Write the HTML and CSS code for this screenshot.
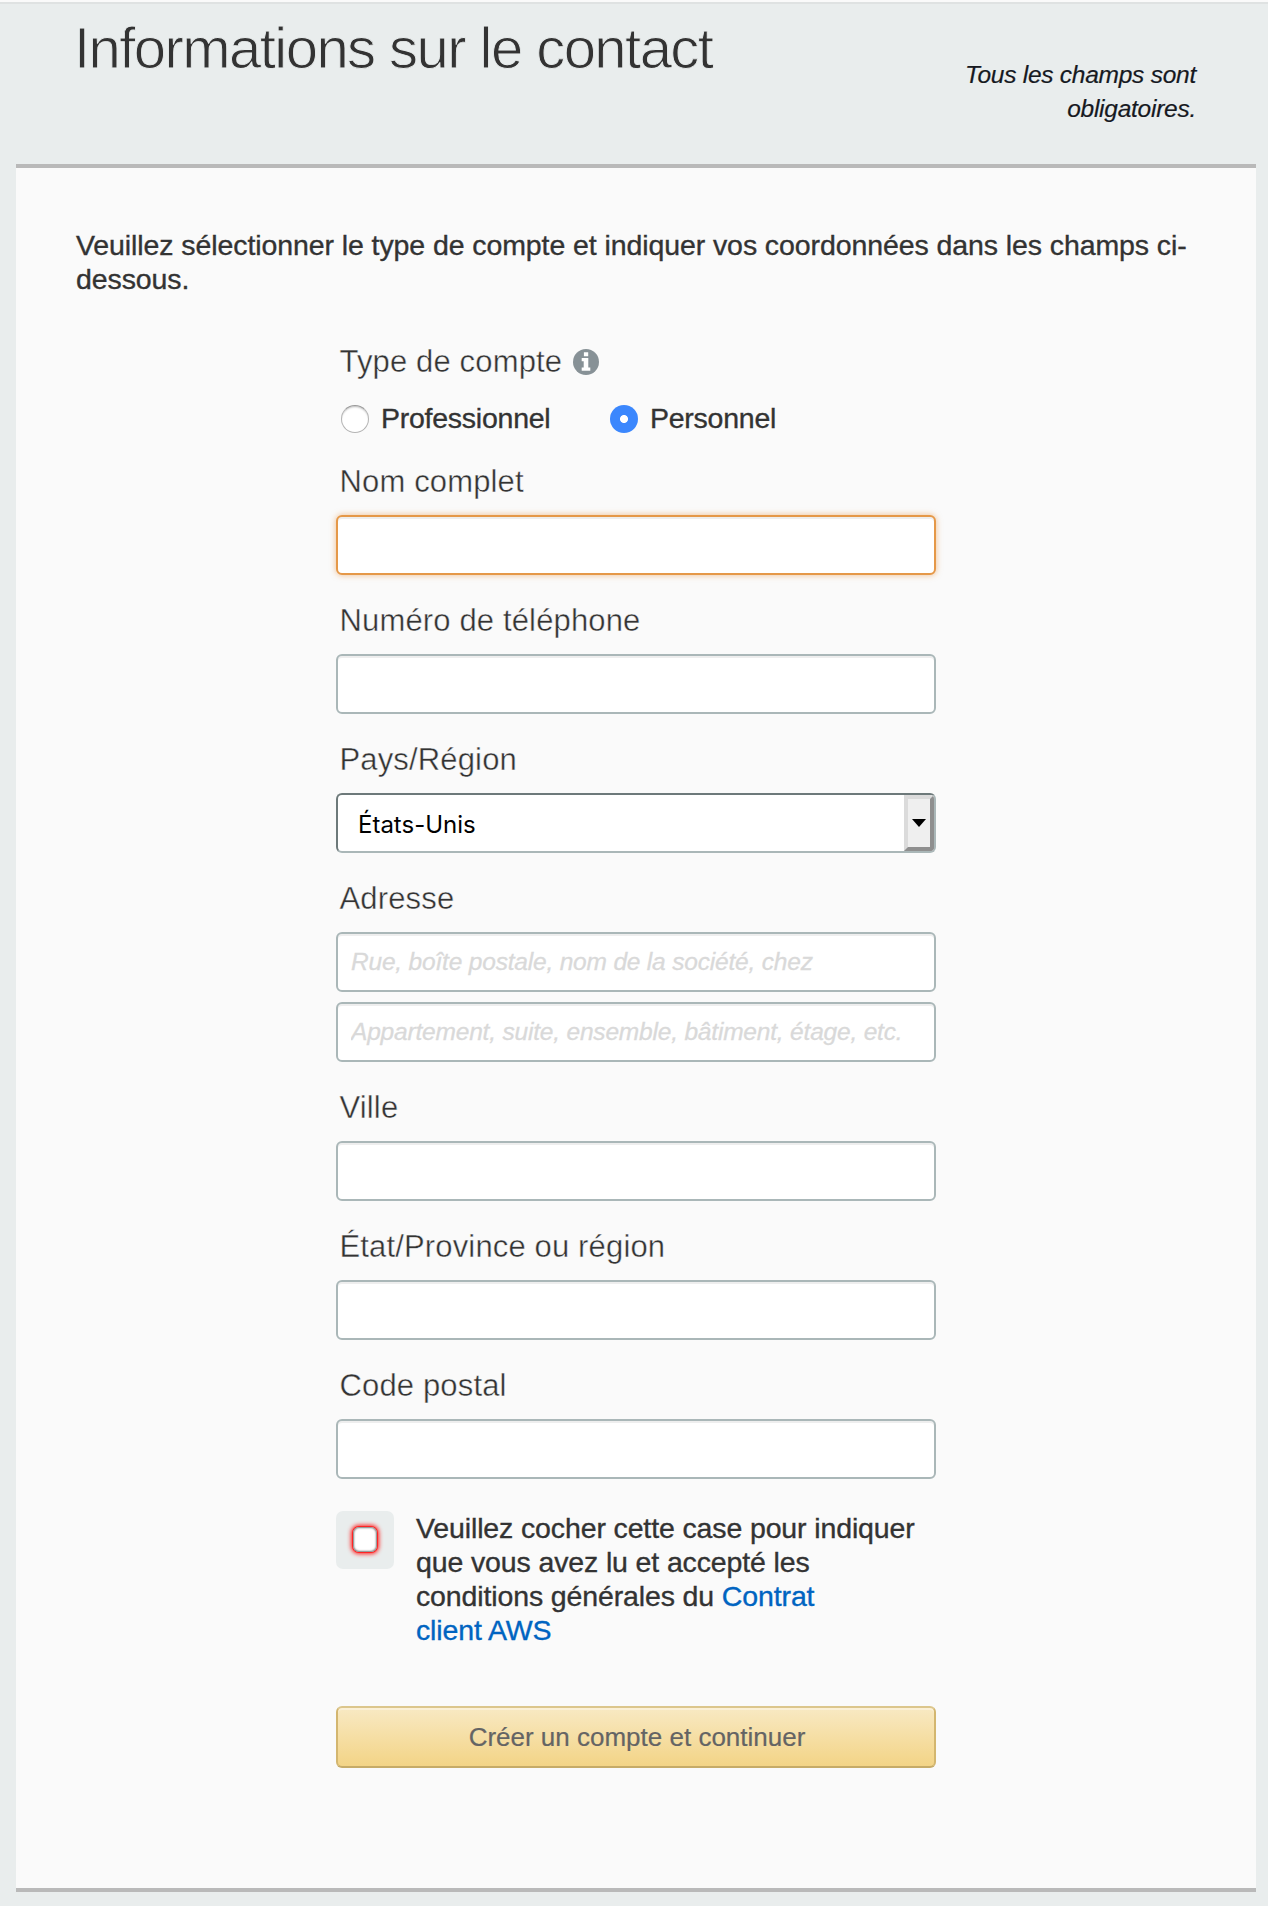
FILE: index.html
```
<!DOCTYPE html>
<html lang="fr">
<head>
<meta charset="utf-8">
<title>Informations sur le contact</title>
<link rel="stylesheet" href="styles.css">
</head>
<body>
<header class="header">
  <h1 class="title">Informations sur le contact</h1>
  <p class="required">Tous les champs sont obligatoires.</p>
</header>
<main class="panel">
  <p class="intro">Veuillez sélectionner le type de compte et indiquer vos coordonnées dans les champs ci-<br>dessous.</p>
  <form class="form">
    <div class="label type-label">Type de compte
      <svg class="info" viewBox="0 0 26 26" aria-hidden="true"><circle cx="13" cy="13" r="13" fill="#879196"/><path fill="#fff" d="M10.9 3.2h4.3v4.1h-4.3zM8.7 9h6.6v9.6h2v3.2H8.7v-3.2h2v-6.4h-2z"/></svg>
    </div>
    <div class="radios">
      <label class="choice pro"><input type="radio" name="type" class="radio">Professionnel</label>
      <label class="choice"><input type="radio" name="type" class="radio" checked>Personnel</label>
    </div>
    <div class="field"><label class="label" for="name">Nom complet</label><input class="input focused" id="name"></div>
    <div class="field"><label class="label" for="phone">Numéro de téléphone</label><input class="input" id="phone"></div>
    <div class="field"><span class="label">Pays/Région</span>
      <div class="select" role="combobox"><span class="value">États-Unis</span><span class="drop"><svg class="arrow" viewBox="0 0 14 8"><path d="M0 0h14L7 8z"/></svg></span></div>
    </div>
    <div class="field"><label class="label" for="street">Adresse</label><input class="input" id="street" placeholder="Rue, boîte postale, nom de la société, chez"><input class="input second" placeholder="Appartement, suite, ensemble, bâtiment, étage, etc."></div>
    <div class="field"><label class="label" for="city">Ville</label><input class="input" id="city"></div>
    <div class="field"><label class="label" for="state">État/Province ou région</label><input class="input" id="state"></div>
    <div class="field"><label class="label" for="zip">Code postal</label><input class="input" id="zip"></div>
    <div class="terms">
      <span class="check-wrap"><input type="checkbox" class="check"></span>
      <p class="terms-text">Veuillez cocher cette case pour indiquer<br>que vous avez lu et accepté les<br>conditions générales du <a class="link" href="#">Contrat<br>client AWS</a></p>
    </div>
    <button type="button" class="submit">Créer un compte et continuer</button>
  </form>
</main>
</body>
</html>
```
FILE: styles.css
```
* { box-sizing: border-box; }

body {
  margin: 0;
  height: 1906px;
  overflow: hidden;
  background: #e9eded;
  border-top: 2px solid #fafafa;
  color: #333;
  font: 28.5px/34px "Liberation Sans", Arial, sans-serif;
}

h1, p { margin: 0; }

.header {
  display: flex;
  justify-content: space-between;
  align-items: flex-start;
  height: 162px;
  padding: 0 72px 0 74px;
  border-top: 2px solid #dfe2e2;
}

/* The background-coloured stroke thins the regular face to a light weight. */
.title {
  padding-top: 9px;
  font-size: 58px;
  font-weight: 400;
  line-height: 70px;
  letter-spacing: -1.55px;
  -webkit-text-stroke: .9px #e9eded;
}

.required {
  width: 240px;
  padding-top: 54px;
  color: #16191f;
  font-size: 24.5px;
  font-style: italic;
  letter-spacing: -.25px;
  text-align: right;
  -webkit-text-stroke: .2px;
}

.panel {
  height: 1728px;
  margin: 0 12px 0 16px;
  padding: 60px 60px 0;
  background: #fafafa;
  border: solid #b9b9b9;
  border-width: 4px 0;
}

.intro {
  white-space: nowrap;
  letter-spacing: -.09px;
}

.intro, .choice, .terms-text { -webkit-text-stroke: .35px; }

.form {
  width: 600px;
  margin: 46px 0 0 260px;
}

.label {
  display: block;
  height: 40px;
  padding-left: 3.5px;
  font-size: 31px;
  line-height: 42px;
  letter-spacing: .15px;
  -webkit-text-stroke: .4px #fafafa;
}

.type-label {
  display: flex;
  align-items: center;
  gap: 11px;
}

.info {
  width: 26px;
  height: 26px;
  -webkit-text-stroke: 0;
}

.radios {
  display: flex;
  height: 34px;
  margin: 19px 0 26px;
  padding-left: 5px;
}

.choice {
  display: flex;
  align-items: center;
  letter-spacing: -.25px;
}

.pro { width: 269px; }

.radio {
  appearance: none;
  width: 28px;
  height: 28px;
  margin: 2px 12px 0 0;
  border: 1px solid #b4b4b4;
  border-top-color: #999;
  border-radius: 50%;
  background: #fff;
  box-shadow: inset 0 2px 2px -1px #bbb;
}

.radio:checked {
  border: 0;
  background: radial-gradient(circle, #fff 3.6px, #3b87fd 4.4px);
  box-shadow: none;
}

.field + .field { margin-top: 25px; }

.input,
.select {
  display: flex;
  width: 600px;
  height: 60px;
  margin: 14px 0 0;
  border: 2px solid #aab7b8;
  border-radius: 6px;
  background: #fff;
}

.input {
  padding: 0 13px 1px;
  font: italic 24.5px "Liberation Sans", Arial, sans-serif;
  letter-spacing: -.19px;
  box-shadow: inset 0 2px 0 #eee;
  outline: 0;
}

.input::placeholder { color: #d9d9d9; opacity: 1; -webkit-text-stroke: .3px; }

.second { margin-top: 10px; }

.focused {
  border-color: #e59848;
  box-shadow: 0 0 6px rgba(229, 136, 48, .55), inset 0 2px 0 #eee;
}

.select {
  justify-content: space-between;
  overflow: hidden;
  border-top-color: #6d797a;
  border-left-color: #6d797a;
}

.value {
  padding: 3px 0 0 20px;
  color: #000;
  font: 24px/54px Inter, sans-serif;
}

.drop {
  display: flex;
  align-items: center;
  justify-content: center;
  width: 30px;
  border: 4px solid;
  border-color: #dbdbdb #8f8f8f #8f8f8f #dbdbdb;
  background: #efefef;
}

.arrow { width: 14px; height: 8px; flex: none; }

.terms {
  display: flex;
  gap: 22px;
  margin-top: 32px;
  letter-spacing: -.13px;
}

.check-wrap {
  display: flex;
  align-items: center;
  justify-content: center;
  flex: none;
  width: 58px;
  height: 58px;
  border-radius: 7px;
  background: #e9eded;
}

.check {
  appearance: none;
  width: 24px;
  height: 25px;
  margin: 0 0 1px;
  border: 0;
  border-radius: 6px;
  background: #fff;
  box-shadow: 0 0 4px 2px #ff2020, 0 0 0 1px #ff3030, inset 0 0 2px 1px #777;
}

.terms-text { white-space: nowrap; }

.link { color: #0064c1; text-decoration: none; }

.submit {
  display: block;
  width: 600px;
  height: 62px;
  margin-top: 59px;
  padding: 0 0 0 2px;
  border: 2px solid #d6b86d;
  border-color: #dcc68c #d3b66f #c6ab67;
  border-radius: 6px;
  background: linear-gradient(#f8e9c3, #f3d486);
  box-shadow: inset 0 2px 0 #fbf0d6;
  color: #646464;
  font: 26px/30px "Liberation Sans", Arial, sans-serif;
  -webkit-text-stroke: .2px;
}
```
